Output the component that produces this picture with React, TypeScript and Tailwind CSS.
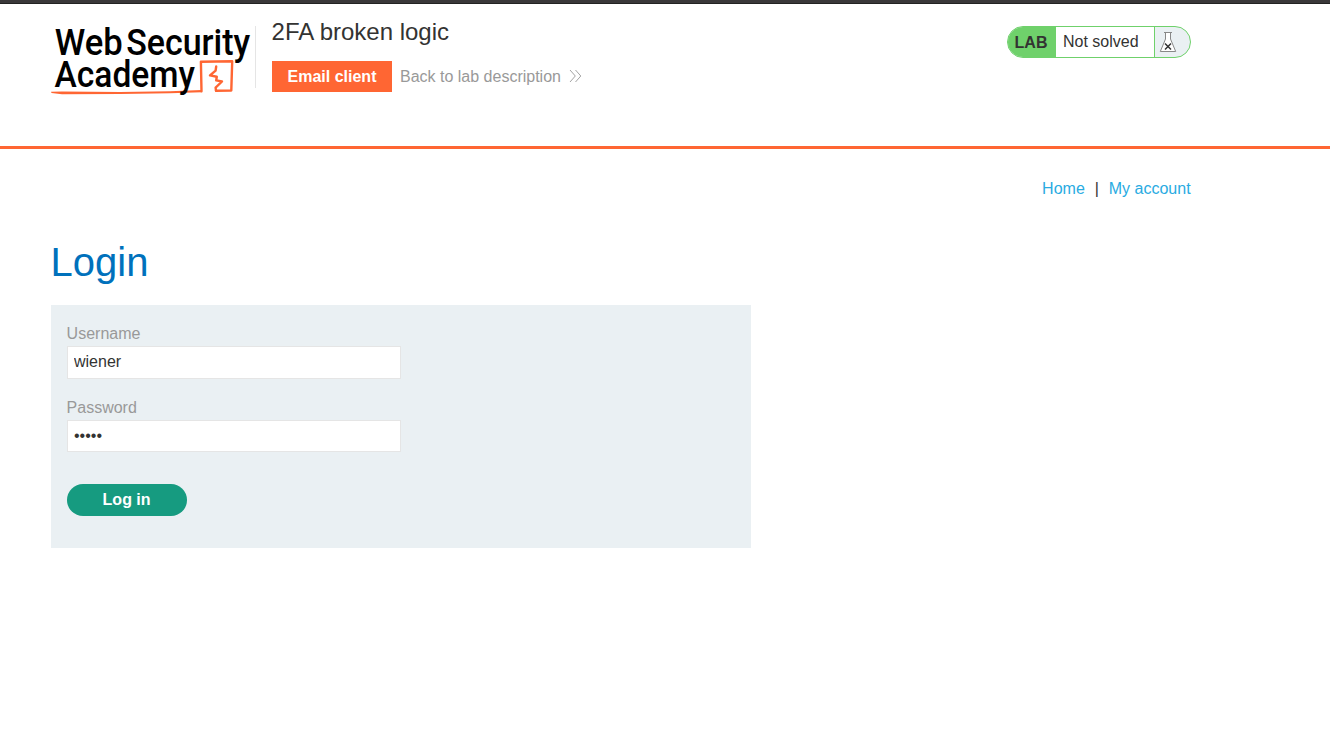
import React from "react";

function Logo() {
  return (
    <svg width="206" height="92" viewBox="50 8 206 92" className="-mt-4 -mr-px -ml-px block shrink-0" role="img" aria-label="Web Security Academy">
      <g fontFamily="Roboto, sans-serif" fontWeight="500" fontSize="37.5" fill="#000">
        <text x="54.8" y="55" textLength="68" lengthAdjust="spacingAndGlyphs">Web</text>
        <text x="126.2" y="55" textLength="124" lengthAdjust="spacingAndGlyphs">Security</text>
      </g>
      <g fill="none" stroke="#ff6633" strokeLinejoin="round" strokeLinecap="round">
        <path d="M201.5 91.3 L200.9 61.8 L232.2 61.2 L231.3 90.5 L216 90.8" strokeWidth="2.4" />
        <path d="M216.2 66.5 L215.6 70.6 L210 75.4 L216.8 76.8 L216.2 80.4 L222 81.5 L215.6 87.6 L216 90.5" strokeWidth="2.4" />
      </g>
      <path d="M51 91.8 L62 91.6 L120 92 L170 91.2 L201.5 90 L201.5 92.2 L170 93.2 L120 94 L62 94.2 L51.5 93 Z" fill="#ff6633" />
      <text x="54.5" y="87.3" fontFamily="Roboto, sans-serif" fontWeight="500" fontSize="37.5" textLength="140.5" lengthAdjust="spacingAndGlyphs" fill="#000">Academy</text>
    </svg>
  );
}

function Chevrons() {
  return (
    <svg width="13" height="14" viewBox="0 0 13 14" className="-mt-0.5 block" fill="none" stroke="#999" strokeWidth="0.9">
      <path d="M1 1 L6.3 7 L1 13 M6.5 1 L11.8 7 L6.5 13" />
    </svg>
  );
}

function Flask() {
  return (
    <svg width="18" height="22" viewBox="0 0 18 22" className="block">
      <path d="M6.5 1.5 V8 L1.3 20.5 H16.7 L11.5 8 V1.5" fill="#fff" stroke="#888" />
      <path d="M5 1.5 H13" stroke="#888" strokeWidth="1.2" />
      <path d="M6 12.5 L12 18.5 M12 12.5 L6 18.5" stroke="#333" strokeWidth="1.5" />
    </svg>
  );
}

export default function App() {
  return (
    <div className="min-h-[754px] bg-white font-['Liberation_Sans',Arial,sans-serif] text-base text-[#333332]">
      <div className="h-1 border-b border-[#222] bg-[#3a3839]" />
      <header className="h-[145px] border-b-3 border-[#ff6633] pl-[50.6px]">
        <div className="flex w-[1140px] items-start pt-5">
          <Logo />
          <div className="mt-0.5 h-[62px] w-px bg-[#e5e5e5]" />
          <div className="-mt-1.5 ml-4 flex-1">
            <h2 className="text-2xl leading-7">2FA broken logic</h2>
            <div className="mt-[15px] flex h-[31px] items-center">
              <a className="flex h-[31px] w-[120px] items-center justify-center bg-[#ff6633] pl-[0.8px] font-bold text-white">Email client</a>
              <a className="ml-[8.4px] flex items-center gap-2 text-[#999]">
                Back to lab description
                <Chevrons />
              </a>
            </div>
          </div>
          <div className="mt-0.5 flex h-8 w-[184px] overflow-hidden rounded-full border border-[#6fd16b] bg-[#eaf0f3]">
            <span className="flex w-12 items-center bg-[#6fd16b] pt-px pl-[7px] font-bold">LAB</span>
            <span className="flex w-[99px] items-center border-r border-[#6fd16b] bg-white pl-[7.4px]">Not solved</span>
            <span className="flex items-center pl-1">
              <Flask />
            </span>
          </div>
        </div>
      </header>

      <main className="ml-[50.6px] w-[1140px] pt-7">
        <nav className="flex h-6 items-center justify-end text-[#29abe2]">
          <a>Home</a>
          <span className="w-6 text-center text-[#333332]">|</span>
          <a>My account</a>
        </nav>
        <h1 className="mt-[35px] text-[40px] leading-[52px] text-[#0071bc]">Login</h1>
        <form className="mt-[17px] h-[243px] w-[700px] bg-[#eaf0f3] px-4 pt-4">
          <label className="flex h-[25px] items-center text-[#999]">Username</label>
          <input
            className="block h-[33px] w-[334px] border border-[#e5e5e5] bg-white px-[6.4px] pb-0.5 text-[#333332] outline-none"
            defaultValue="wiener"
          />
          <label className="mt-4 flex h-[25px] items-center text-[#999]">Password</label>
          <input
            type="password"
            className="block h-8 w-[334px] border border-[#e5e5e5] bg-white px-[6.4px] text-[#333332] outline-none"
            defaultValue="peter"
          />
          <button type="button" className="mt-8 flex h-8 w-[120px] items-center justify-center rounded-full bg-[#169b80] pb-px font-bold text-white">
            Log in
          </button>
        </form>
      </main>
    </div>
  );
}
